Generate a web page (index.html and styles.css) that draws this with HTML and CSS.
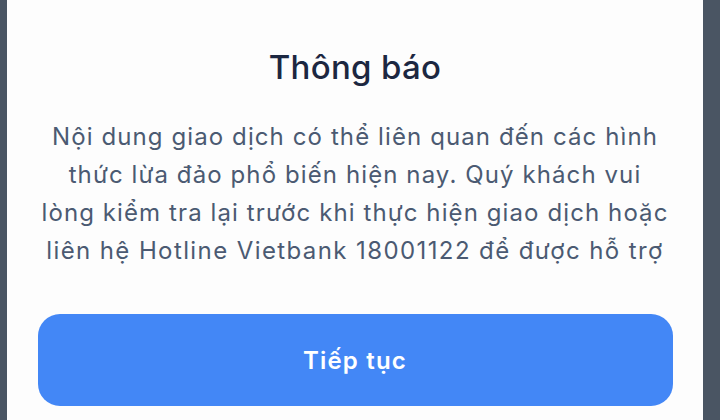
FILE: index.html
```html
<!DOCTYPE html>
<html lang="vi">
<head>
<meta charset="utf-8">
<link rel="stylesheet" href="styles.css">
</head>
<body>
<div class="screen">
  <div class="sheet">
    <h1 class="title">Thông báo</h1>
    <p class="message">Nội dung giao dịch có thể liên quan đến các hình<br>thức lừa đảo phổ biến hiện nay. Quý khách vui<br>lòng kiểm tra lại trước khi thực hiện giao dịch hoặc<br><span class="last">liên hệ Hotline Vietbank 18001122 để được hỗ trợ</span></p>
    <button class="primary">Tiếp tục</button>
  </div>
</div>
</body>
</html>
```
FILE: styles.css
```css
html, body {
  margin: 0;
  padding: 0;
  width: 720px;
  height: 420px;
  overflow: hidden;
  background: #4a5563;
}
.screen {
  display: flex;
  height: 420px;
  padding-left: 7px;
  padding-right: 17px;
}
.sheet {
  flex: 1;
  background: #fdfdfd;
  display: flex;
  flex-direction: column;
  align-items: center;
  font-family: Inter, "Noto Sans", sans-serif;
}
.title {
  margin: 47px 0 0 0;
  font-size: 33px;
  line-height: 40px;
  font-weight: 500;
  letter-spacing: 0.3px;
  color: #1c2741;
}
.message {
  margin: 31px 0 0 0;
  font-size: 24px;
  line-height: 38px;
  font-weight: 400;
  letter-spacing: 1.1px;
  color: #4b5a72;
  text-align: center;
  white-space: nowrap;
}
.message .last {
  letter-spacing: 1.4px;
}
.primary {
  margin-top: 44px;
  width: 635px;
  height: 92px;
  border: none;
  border-radius: 22px;
  background: #4387f6;
  color: #ffffff;
  font-family: Inter, "Noto Sans", sans-serif;
  font-size: 24px;
  font-weight: 600;
  letter-spacing: 1.2px;
}
```
